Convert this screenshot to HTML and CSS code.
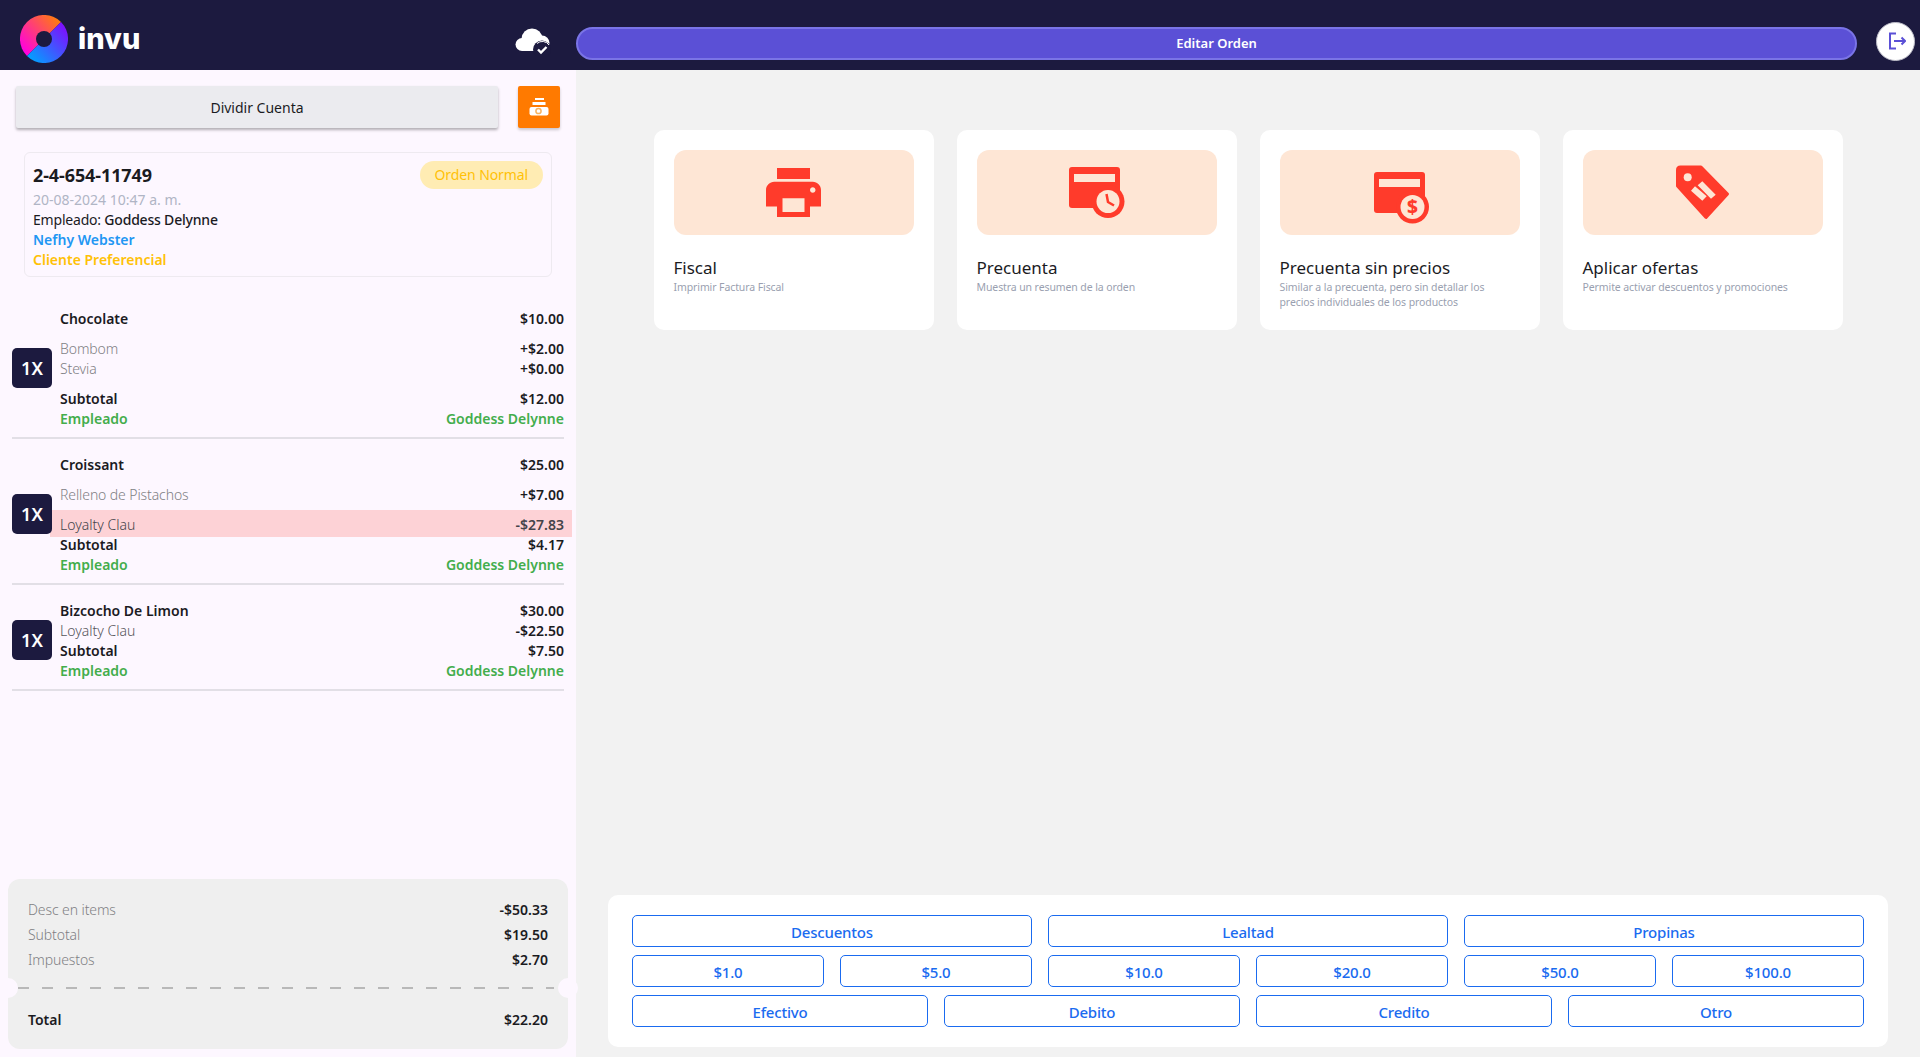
FILE: index.html
```html
<!DOCTYPE html>
<html lang="es">
<head>
  <meta charset="UTF-8" />
  <title>Invu - Editar Orden</title>
  <link rel="stylesheet" href="styles.css">
</head>
<body>
  <header class="cabecera">
    <div class="marca">
      <svg class="logo" viewBox="0 0 48 48">
        <defs>
          <linearGradient id="logoA" x1="0.05" y1="0.85" x2="0.9" y2="0.1">
            <stop offset="0" stop-color="#ff00e0" />
            <stop offset="1" stop-color="#ff7a12" />
          </linearGradient>
          <linearGradient id="logoB" x1="0.1" y1="0.95" x2="0.95" y2="0.15">
            <stop offset="0" stop-color="#00a2ff" />
            <stop offset="1" stop-color="#7d10ff" />
          </linearGradient>
        </defs>
        <path d="M41 7A24 24 0 0 0 7 41Z" fill="url(#logoA)" />
        <path d="M41 7A24 24 0 0 1 7 41Z" fill="url(#logoB)" />
        <circle cx="24" cy="24" r="8" fill="#1c1a3f" />
      </svg>
      <span class="marca-texto">invu</span>
    </div>
    <svg class="nube" viewBox="0 0 36 28">
      <circle cx="7" cy="16.500" r="6.500" fill="#fff" />
      <circle cx="17" cy="11" r="10.500" fill="#fff" />
      <circle cx="27" cy="15" r="7.500" fill="#fff" />
      <rect x="7" y="14" width="20" height="9" fill="#fff" />
      <circle cx="27" cy="21.500" r="9" fill="#1c1a3f" />
      <path d="M22 15.500A8 8 0 0 1 34 17" fill="none" stroke="#fff" stroke-width="1" />
      <path d="M23 21.500l3 3 5.500-5.500" fill="none" stroke="#fff" stroke-width="2.400" />
    </svg>
    <button class="editar-btn">Editar Orden</button>
    <button class="salir-btn">
      <svg viewBox="0 0 20 20" width="20" height="20">
        <path d="M10 2.500H4v15h6" fill="none" stroke="#5b50d6" stroke-width="2" />
        <path d="M8 10h11M15.500 6.500L19 10l-3.500 3.500" fill="none" stroke="#5b50d6" stroke-width="2" />
      </svg>
    </button>
  </header>

  <div class="contenido">
    <aside class="lateral">
      <div class="acciones">
        <button class="dividir-btn">Dividir Cuenta</button>
        <button class="caja-btn">
          <svg viewBox="0 0 20 18" width="20" height="18">
            <rect x="6" y="0" width="9" height="2" fill="#fff" />
            <rect x="3.500" y="4" width="13" height="3" fill="#fff" />
            <rect x="0.500" y="9" width="19" height="8.500" rx="2" fill="#fff" />
            <circle cx="9.500" cy="13" r="2.600" fill="none" stroke="#f9b35e" stroke-width="1.500" />
          </svg>
        </button>
      </div>

      <section class="orden">
        <div class="orden-top">
          <span class="orden-num">2-4-654-11749</span>
          <span class="orden-tipo">Orden Normal</span>
        </div>
        <div class="linea fecha">20-08-2024 10:47 a. m.</div>
        <div class="linea linea-empleado">Empleado: <span class="medio">Goddess Delynne</span></div>
        <div class="linea cliente">Nefhy Webster</div>
        <div class="linea preferencial">Cliente Preferencial</div>
      </section>

      <div class="items">
        <div class="item">
          <div class="cantidad">1X</div>
          <div class="item-body">
            <div class="fila fuerte"><span>Chocolate</span><span>$10.00</span></div>
            <div class="extras">
              <div class="fila"><span class="gris">Bombom</span><span class="fuerte">+$2.00</span></div>
              <div class="fila"><span class="gris">Stevia</span><span class="fuerte">+$0.00</span></div>
            </div>
            <div class="fila fuerte"><span>Subtotal</span><span>$12.00</span></div>
            <div class="fila empleado"><span>Empleado</span><span>Goddess Delynne</span></div>
          </div>
        </div>

        <div class="item">
          <div class="cantidad">1X</div>
          <div class="item-body">
            <div class="fila fuerte"><span>Croissant</span><span>$25.00</span></div>
            <div class="extras solo">
              <div class="fila"><span class="gris">Relleno de Pistachos</span><span class="fuerte">+$7.00</span></div>
            </div>
            <div class="fila descuento"><span>Loyalty Clau</span><span class="fuerte">-$27.83</span></div>
            <div class="fila fuerte"><span>Subtotal</span><span>$4.17</span></div>
            <div class="fila empleado"><span>Empleado</span><span>Goddess Delynne</span></div>
          </div>
        </div>

        <div class="item">
          <div class="cantidad">1X</div>
          <div class="item-body">
            <div class="fila fuerte"><span>Bizcocho De Limon</span><span>$30.00</span></div>
            <div class="fila"><span class="loyalty">Loyalty Clau</span><span class="fuerte">-$22.50</span></div>
            <div class="fila fuerte"><span>Subtotal</span><span>$7.50</span></div>
            <div class="fila empleado"><span>Empleado</span><span>Goddess Delynne</span></div>
          </div>
        </div>
      </div>

      <section class="totales">
        <div class="totales-arriba">
          <div class="fila-total"><span class="gris">Desc en items</span><span class="fuerte">-$50.33</span></div>
          <div class="fila-total"><span class="gris">Subtotal</span><span class="fuerte">$19.50</span></div>
          <div class="fila-total"><span class="gris">Impuestos</span><span class="fuerte">$2.70</span></div>
        </div>
        <div class="corte"></div>
        <div class="fila-total fuerte gran-total"><span>Total</span><span>$22.20</span></div>
      </section>
    </aside>

    <main class="principal">
      <div class="tarjetas">
        <div class="tarjeta">
          <div class="tarjeta-icono">
            <svg viewBox="2 3 20 18" width="55" height="49.500">
              <path fill="#ff3b2b" d="M19 8H5c-1.660 0-3 1.340-3 3v6h4v4h12v-4h4v-6c0-1.660-1.340-3-3-3zm-3 11H8v-5h8v5zm3-7c-.55 0-1-.45-1-1s.45-1 1-1 1 .45 1 1-.45 1-1 1zm-1-9H6v4h12V3z" />
            </svg>
          </div>
          <h3>Fiscal</h3>
          <p>Imprimir Factura Fiscal</p>
        </div>

        <div class="tarjeta">
          <div class="tarjeta-icono">
            <svg viewBox="0 0 56 51" width="56" height="51">
              <rect width="51" height="41" rx="3" fill="#ff3b2b" />
              <rect x="5" y="7" width="41" height="8" fill="#fee6d5" />
              <circle cx="39" cy="34.500" r="16.500" fill="#ff3b2b" />
              <circle cx="39" cy="34.500" r="11.500" fill="#fee6d5" />
              <path d="M37.500 27l1.500 8 6 3.500" fill="none" stroke="#ff3b2b" stroke-width="2.500" />
            </svg>
          </div>
          <h3>Precuenta</h3>
          <p>Muestra un resumen de la orden</p>
        </div>

        <div class="tarjeta">
          <div class="tarjeta-icono">
            <svg class="icono-precio" viewBox="0 0 56 52" width="56" height="52">
              <rect width="51" height="41" rx="3" fill="#ff3b2b" />
              <rect x="5" y="7" width="41" height="8" fill="#fee6d5" />
              <circle cx="38.500" cy="35" r="16.500" fill="#ff3b2b" />
              <circle cx="38.500" cy="35" r="12" fill="#fee6d5" />
              <text x="38.500" y="41.500" class="icono-dolar">$</text>
            </svg>
          </div>
          <h3>Precuenta sin precios</h3>
          <p>Similar a la precuenta, pero sin detallar los precios individuales de los productos</p>
        </div>

        <div class="tarjeta">
          <div class="tarjeta-icono">
            <svg viewBox="0 0 54 55" width="54" height="55">
              <path fill="#ff3b2b" stroke="#ff3b2b" stroke-width="3" stroke-linejoin="round" d="M1.500 5Q1.500 2 4.500 2H25L51.500 29 30 52.500 1.500 21Z" />
              <circle cx="11.700" cy="12.300" r="4" fill="#fee6d5" />
              <path fill="#fee6d5" d="M15 25.700l4-4.400 11.700 10-4.400 4.400zM21.700 20.300l4.600-4 13.400 13.400-4.700 4z" />
            </svg>
          </div>
          <h3>Aplicar ofertas</h3>
          <p>Permite activar descuentos y promociones</p>
        </div>
      </div>

      <section class="pagos">
        <div class="pagos-fila tres">
          <button>Descuentos</button>
          <button>Lealtad</button>
          <button>Propinas</button>
        </div>
        <div class="pagos-fila seis">
          <button>$1.0</button>
          <button>$5.0</button>
          <button>$10.0</button>
          <button>$20.0</button>
          <button>$50.0</button>
          <button>$100.0</button>
        </div>
        <div class="pagos-fila cuatro">
          <button>Efectivo</button>
          <button>Debito</button>
          <button>Credito</button>
          <button>Otro</button>
        </div>
      </section>
    </main>
  </div>
</body>
</html>
```

FILE: styles.css
```css
:root {
  --oscuro: #1c1a3f;
  --violeta: #5b50d6;
  --rojo: #ff3b2b;
  --azul: #1a6bf0;
  --verde: #43ad4c;
  --lateral-bg: #fdf7ff;
}

* {
  box-sizing: border-box;
  margin: 0;
  padding: 0;
}

html, body {
  height: 100%;
  overflow: hidden;
}

body {
  font-family: "Noto Sans", "Open Sans", sans-serif;
  font-size: 14px;
  line-height: 20px;
  color: #1b1b1f;
  background-color: #f2f2f2;
  display: flex;
  flex-direction: column;
}

button {
  font-family: inherit;
  cursor: pointer;
}

.cabecera {
  height: 70px;
  flex: none;
  background-color: var(--oscuro);
  display: flex;
  align-items: center;
}

.marca {
  width: 515px;
  padding-left: 20px;
  display: flex;
  align-items: center;
  gap: 10px;
}

.logo {
  width: 48px;
  height: 48px;
  margin-top: 8px;
}

.marca-texto {
  font-family: "Inter", sans-serif;
  font-size: 29px;
  font-weight: 800;
  line-height: 40px;
  margin-top: 7px;
  color: #fff;
}

.nube {
  width: 36px;
  height: 28px;
  margin-top: 14px;
  flex: none;
}

.editar-btn {
  width: 1281px;
  height: 33px;
  margin: 16px 0 0 25px;
  background-color: var(--violeta);
  border: 2px solid #7a74e6;
  border-radius: 17px;
  color: #fff;
  font-size: 13px;
  font-weight: 600;
}

.salir-btn {
  width: 39px;
  height: 39px;
  margin: 12px 0 0 19px;
  background-color: #fff;
  border: 1px solid #bdbdc8;
  border-radius: 50%;
  display: flex;
  align-items: center;
  justify-content: center;
}

.contenido {
  flex: 1;
  display: flex;
  min-height: 0;
}

/* columna izquierda */
.lateral {
  width: 576px;
  flex: none;
  background-color: var(--lateral-bg);
  display: flex;
  flex-direction: column;
  padding-bottom: 8px;
}

.acciones {
  display: flex;
  gap: 20px;
  padding: 16px 16px 0;
}

.dividir-btn {
  flex: 1;
  height: 42px;
  background-color: #ebebef;
  border: none;
  border-radius: 2px;
  box-shadow: 0 2px 3px rgba(0, 0, 0, 0.3);
  font-size: 14px;
  color: #1b1b1f;
}

.caja-btn {
  width: 42px;
  height: 42px;
  background-color: #ff7a00;
  border: none;
  border-radius: 2px;
  box-shadow: 0 2px 3px rgba(0, 0, 0, 0.2);
  display: flex;
  align-items: center;
  justify-content: center;
}

.orden {
  margin: 24px 24px 0;
  padding: 8px 8px 6px 8px;
  height: 125px;
  border: 1px solid #eeeaf0;
  border-radius: 6px;
}

.orden-top {
  display: flex;
  justify-content: space-between;
  align-items: center;
  margin-bottom: 1px;
}

.orden-num {
  font-size: 18px;
  font-weight: 700;
  letter-spacing: -0.1px;
}

.orden-tipo {
  height: 28px;
  line-height: 28px;
  padding: 0 15px;
  border-radius: 14px;
  background-color: #ffecb3;
  color: #ffc107;
  letter-spacing: -0.1px;
}

.fecha {
  color: #b0b5c5;
}

.linea-empleado {
  letter-spacing: -0.2px;
}

.medio {
  font-weight: 500;
}

.cliente {
  color: #2196f3;
  font-weight: 600;
}

.preferencial {
  color: #ffc107;
  font-weight: 600;
}

.items {
  padding: 16px 12px 0;
  flex: 1;
}

.item {
  display: flex;
  align-items: center;
  gap: 8px;
  padding: 16px 0 8px;
  border-bottom: 2px solid #e2dfe6;
}

.cantidad {
  width: 40px;
  height: 40px;
  flex: none;
  position: relative;
  z-index: 1;
  margin-bottom: 2px;
  background-color: var(--oscuro);
  border-radius: 5px;
  color: #fff;
  font-size: 18px;
  font-weight: 600;
  line-height: 40px;
  text-align: center;
}

.item-body {
  flex: 1;
  min-width: 0;
}

.fila,
.fila-total {
  display: flex;
  justify-content: space-between;
}

.fuerte {
  font-weight: 600;
}

.gris {
  color: #7f7f84;
  font-weight: 300;
  letter-spacing: -0.1px;
}

.loyalty {
  color: #55555a;
  font-weight: 300;
}

.extras {
  margin: 10px 0;
}

.extras.solo {
  margin-bottom: 5px;
}

.descuento {
  margin: 0 -8px -2px -10px;
  padding: 5px 8px 2px 10px;
  background-color: #fdd2d6;
  color: #44444a;
  font-weight: 300;
}

.empleado {
  color: var(--verde);
  font-weight: 600;
}

.totales {
  margin: 0 8px;
  height: 170px;
  flex: none;
  background-color: #efefef;
  border-radius: 12px;
}

.totales-arriba {
  padding: 18px 20px 0;
  height: 104px;
}

.fila-total {
  line-height: 25px;
}

.corte {
  height: 12px;
  margin: 0 14px 0 10px;
  background-image: repeating-linear-gradient(to right, #b8b8b8 0, #b8b8b8 11px, transparent 11px, transparent 24px);
  background-size: 100% 2px;
  background-position: 0 4px;
  background-repeat: no-repeat;
  position: relative;
}

/* muescas del ticket */
.corte::before,
.corte::after {
  content: "";
  position: absolute;
  top: -5px;
  width: 20px;
  height: 20px;
  border-radius: 50%;
  background-color: var(--lateral-bg);
}

.corte::before {
  left: -20px;
}

.corte::after {
  right: -24px;
}

.gran-total {
  padding: 12px 20px 0;
}

/* zona derecha */
.principal {
  flex: 1;
  min-width: 0;
  display: flex;
  flex-direction: column;
  justify-content: space-between;
  padding-bottom: 10px;
}

.tarjetas {
  display: flex;
  justify-content: center;
  gap: 23px;
  padding-top: 60px;
}

.tarjeta {
  width: 280px;
  height: 200px;
  padding: 20px;
  background-color: #fff;
  border-radius: 10px;
}

.tarjeta-icono {
  height: 85px;
  background-color: #fee6d5;
  border-radius: 12px;
  display: flex;
  align-items: center;
  justify-content: center;
}

.icono-precio {
  margin: 10px 0 0 5px;
}

.icono-dolar {
  font-family: "Noto Sans", sans-serif;
  font-size: 19px;
  font-weight: 800;
  fill: #ff3b2b;
  text-anchor: middle;
}

.tarjeta h3 {
  margin-top: 21px;
  font-size: 17px;
  font-weight: 400;
  line-height: 24px;
}

.tarjeta p {
  font-size: 10.500px;
  letter-spacing: -0.1px;
  line-height: 15px;
  color: #9a9fb0;
}

.pagos {
  margin: 0 32px;
  padding: 20px 24px;
  background-color: #fff;
  border-radius: 10px;
  display: flex;
  flex-direction: column;
  gap: 8px;
}

.pagos-fila {
  display: grid;
  gap: 16px;
}

.pagos-fila.tres {
  grid-template-columns: repeat(3, 1fr);
}

.pagos-fila.seis {
  grid-template-columns: repeat(6, 1fr);
}

.pagos-fila.cuatro {
  grid-template-columns: repeat(4, 1fr);
}

.pagos button {
  height: 32px;
  padding-top: 2px;
  background-color: #fff;
  border: 1.500px solid var(--azul);
  border-radius: 5px;
  color: var(--azul);
  font-size: 15px;
  font-weight: 500;
  letter-spacing: -0.2px;
}
```
